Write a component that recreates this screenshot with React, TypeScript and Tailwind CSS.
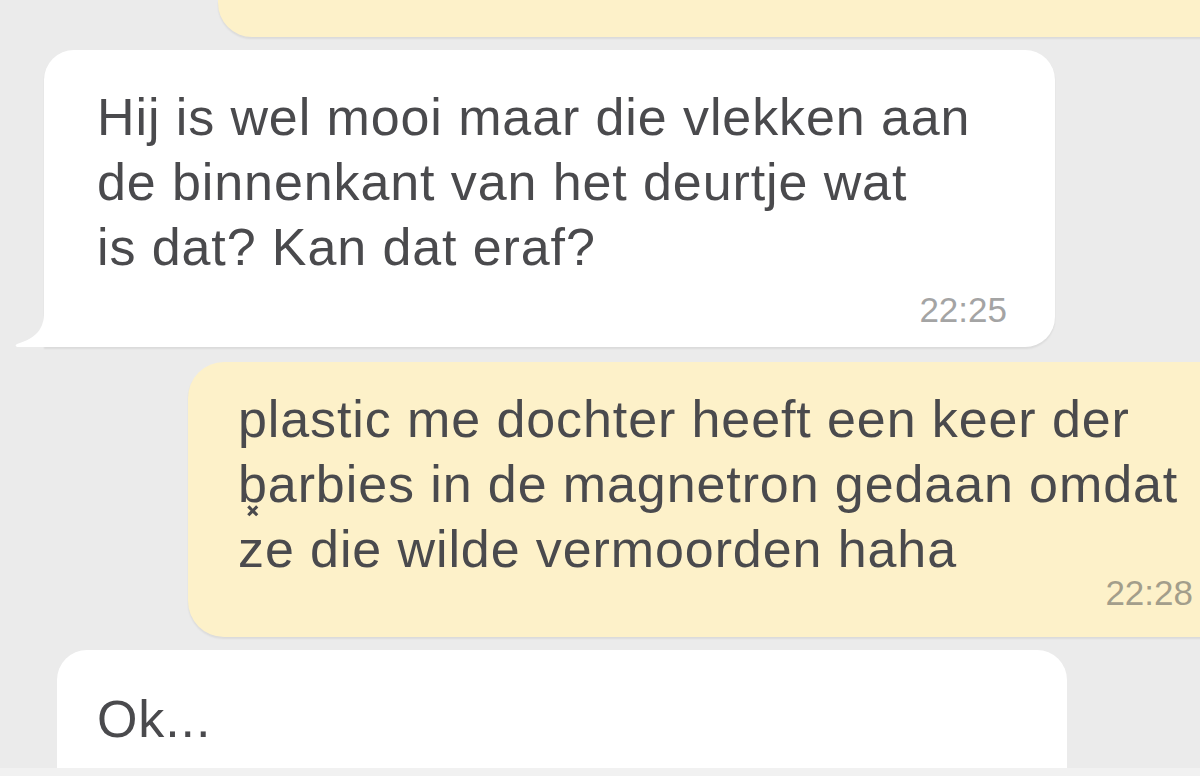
export default function App() {
  const body = "font-['Liberation_Sans',Arial,sans-serif] text-[52px] leading-[65px] tracking-[0.9px] text-[#4a4a4d]";
  const time = "font-['Liberation_Sans',Arial,sans-serif] text-[35px] leading-[40px] text-right";
  return (
    <div className="w-[1200px] h-[776px] overflow-hidden bg-[#ebebeb] flex flex-col relative">
      {/* previous outgoing bubble, cut off at the top */}
      <div className="ml-[218px] w-[1040px] h-[37px] shrink-0 bg-[#fdf1c9] rounded-bl-[34px] shadow-[0_2px_2px_rgba(0,0,0,0.07)]" />

      {/* incoming */}
      <div className="relative ml-[44px] mt-[13px] w-[1011px] shrink-0 bg-white rounded-[30px] rounded-bl-none pl-[53px] pr-[48px] pt-[35px] pb-[17px] shadow-[0_2px_2px_rgba(0,0,0,0.07)]">
        <svg className="absolute left-[-29px] bottom-0" width="30" height="34" viewBox="0 0 30 34">
          <path d="M30 0 L29 0 C29 15 22 25 2 31 C0 32 0 34 4 34 L30 34 Z" fill="#ffffff" />
        </svg>
        <p className={body}>
          Hij is wel mooi maar die vlekken aan
          <br />
          de binnenkant van het deurtje wat
          <br />
          is dat? Kan dat eraf?
        </p>
        <p className={`${time} mt-[10px] text-[#a4a4a4]`}>22:25</p>
      </div>

      {/* outgoing */}
      <div className="ml-[188px] mt-[15px] w-[1052px] shrink-0 bg-[#fdf1c9] rounded-l-[36px] pl-[50px] pr-[47px] pt-[25px] pb-[24px] shadow-[0_2px_2px_rgba(0,0,0,0.07)]">
        <p className={body}>
          plastic me dochter heeft een keer der
          <br />
          b{"\u0353"}arbies in de magnetron gedaan omdat
          <br />
          ze die wilde vermoorden haha
        </p>
        <p className={`${time} mt-[-9px] text-[#a39e8b]`}>22:28</p>
      </div>

      {/* incoming */}
      <div className="ml-[57px] mt-[13px] w-[1010px] flex-1 bg-white rounded-t-[30px] pl-[40px] pt-[37px]">
        <p className={body}>Ok...</p>
      </div>
      <div className="h-[8px] shrink-0 bg-[#f1f1f1]" />
    </div>
  );
}
